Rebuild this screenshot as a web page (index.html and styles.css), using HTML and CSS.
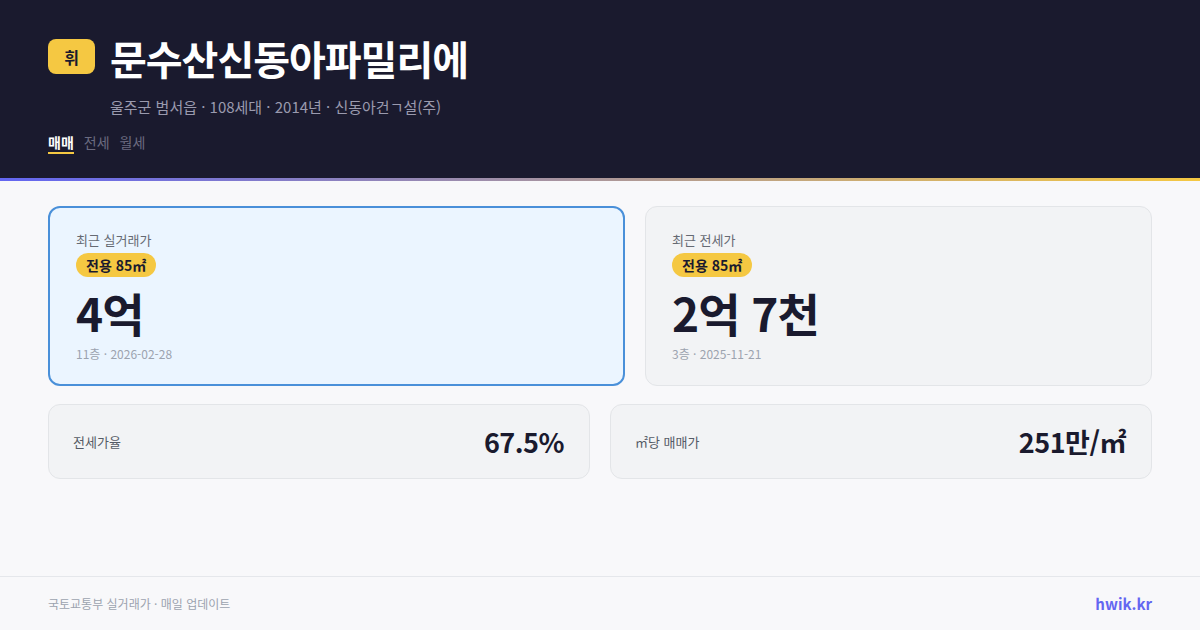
FILE: index.html
```html
<!DOCTYPE html>
<html lang="ko">
<head>
<meta charset="utf-8">
<title>문수산신동아파밀리에</title>
<link rel="stylesheet" href="styles.css">
</head>
<body>
<div class="page">
  <header class="header">
    <div class="head-row">
      <div class="logo">휘</div>
      <div class="title-block">
        <h1 class="title">문수산신동아파밀리에</h1>
        <div class="sub">울주군 범서읍 · 108세대 · 2014년 · 신동아건ㄱ설(주)</div>
      </div>
    </div>
    <nav class="tabs">
      <span class="tab active">매매</span>
      <span class="tab">전세</span>
      <span class="tab">월세</span>
    </nav>
  </header>
  <div class="accent"></div>
  <main class="main">
    <section class="row-top">
      <div class="card card-primary">
        <div class="card-label">최근 실거래가</div>
        <div class="pill">전용 85㎡</div>
        <div class="big">4억</div>
        <div class="meta">11층 · 2026-02-28</div>
      </div>
      <div class="card card-plain">
        <div class="card-label">최근 전세가</div>
        <div class="pill">전용 85㎡</div>
        <div class="big">2억 7천</div>
        <div class="meta">3층 · 2025-11-21</div>
      </div>
    </section>
    <section class="row-bottom">
      <div class="stat">
        <span class="stat-label">전세가율</span>
        <span class="stat-value">67.5%</span>
      </div>
      <div class="stat">
        <span class="stat-label">㎡당 매매가</span>
        <span class="stat-value">251만/㎡</span>
      </div>
    </section>
  </main>
  <footer class="footer">
    <span class="source">국토교통부 실거래가 · 매일 업데이트</span>
    <span class="brand">hwik.kr</span>
  </footer>
</div>
</body>
</html>
```
FILE: styles.css
```css
* { box-sizing: border-box; margin: 0; padding: 0; }
html, body {
  width: 1200px;
  height: 630px;
  overflow: hidden;
  background: #f8f8fa;
  font-family: "Noto Sans CJK KR", "Noto Sans", sans-serif;
}
.page {
  width: 1200px;
  height: 630px;
  display: flex;
  flex-direction: column;
}
.header {
  background: #1a1a2e;
  height: 178px;
  padding: 35px 48px 0;
}
.head-row {
  display: flex;
  align-items: flex-start;
  gap: 15px;
}
.logo {
  margin-top: 4px;
  width: 47px;
  height: 35px;
  border-radius: 8px;
  background: #f5c842;
  color: #1a1a2e;
  font-weight: 700;
  font-size: 16px;
  display: flex;
  align-items: center;
  justify-content: center;
}
.title {
  color: #ffffff;
  font-size: 40px;
  font-weight: 700;
  line-height: 46px;
  letter-spacing: -1px;
}
.sub {
  margin-top: 15px;
  color: #9a9aae;
  font-size: 15px;
  line-height: 22px;
}
.tabs {
  margin-top: 16px;
  display: flex;
  gap: 10px;
}
.tab {
  font-size: 14px;
  line-height: 16px;
  color: #6b6b80;
  padding-bottom: 2px;
  border-bottom: 2px solid transparent;
}
.tab.active {
  color: #ffffff;
  font-weight: 700;
  border-bottom-color: #f5c842;
}
.accent {
  height: 3px;
  background: linear-gradient(90deg, #6366f1, #f5c842);
}
.main {
  flex: 1;
  padding: 25px 48px 0;
  display: flex;
  flex-direction: column;
  gap: 18px;
}
.row-top {
  display: grid;
  grid-template-columns: 577fr 507fr;
  gap: 20px;
  height: 180px;
}
.card {
  border-radius: 12px;
  display: flex;
  flex-direction: column;
  align-items: flex-start;
}
.card-primary {
  background: #ebf5ff;
  border: 2px solid #4a90d9;
  padding: 23px 26px 0;
}
.card-plain {
  background: #f2f3f5;
  border: 1px solid #e3e5e8;
  padding: 24px 26px 0;
}
.card-label {
  font-size: 13px;
  line-height: 18px;
  color: #666a73;
}
.pill {
  margin-top: 4px;
  height: 24px;
  padding: 0 10px;
  border-radius: 12px;
  background: #f5c842;
  color: #1a1a2e;
  font-size: 14px;
  font-weight: 700;
  line-height: 24px;
}
.big {
  margin-top: 10px;
  font-size: 46px;
  font-weight: 700;
  line-height: 50px;
  color: #1a1a2e;
  letter-spacing: -1px;
}
.meta {
  margin-top: 9px;
  font-size: 12px;
  line-height: 16px;
  color: #9ca3af;
}
.row-bottom {
  display: grid;
  grid-template-columns: 1fr 1fr;
  gap: 20px;
  height: 75px;
}
.stat {
  background: #f2f3f5;
  border: 1px solid #e3e5e8;
  border-radius: 12px;
  display: flex;
  align-items: center;
  justify-content: space-between;
  padding: 0 25px 0 24px;
}
.stat-label {
  font-size: 13px;
  color: #555b66;
}
.stat-value {
  font-size: 27px;
  font-weight: 700;
  color: #1a1a2e;
  letter-spacing: -0.5px;
}
.footer {
  height: 54px;
  border-top: 1px solid #e5e7eb;
  padding: 0 48px;
  display: flex;
  align-items: center;
  justify-content: space-between;
}
.source {
  font-size: 12px;
  color: #9ca3af;
}
.brand {
  font-size: 15px;
  font-weight: 700;
  color: #6366f1;
}
```
